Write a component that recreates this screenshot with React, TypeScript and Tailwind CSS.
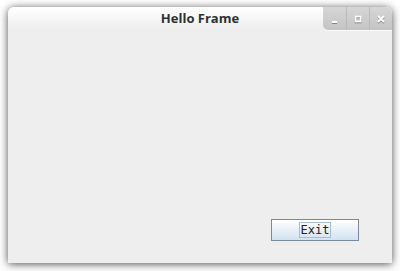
const WinButton = ({ kind }: { kind: "min" | "max" | "close" }) => (
  <div className="flex h-full w-[23px] items-center justify-center border-l border-[#b9b9b9] first:border-l-0">
    <svg width="8" height="8" viewBox="0 0 8 8" className="drop-shadow-[0_1px_0_rgba(0,0,0,0.35)]">
      {kind === "min" && <rect x="1" y="6" width="5" height="2" fill="#ffffff" />}
      {kind === "max" && <rect x="1.5" y="1.5" width="5" height="5" fill="none" stroke="#ffffff" strokeWidth="1.6" />}
      {kind === "close" && (
        <path d="M1 1 L7 7 M7 1 L1 7" stroke="#ffffff" strokeWidth="1.8" />
      )}
    </svg>
  </div>
);

export default function App() {
  return (
    <div className="h-[271px] w-[400px] bg-white pl-[8px] pt-[7px]">
      <div className="flex h-[256px] w-[384px] flex-col rounded-t-[6px] bg-[#eeeeee] shadow-[0_1px_8px_rgba(0,0,0,0.7)]">
        <div className="relative flex h-[24px] items-center justify-center rounded-t-[6px] bg-gradient-to-b from-[#ffffff] to-[#ededed]">
          <span className="font-['Open_Sans','Noto_Sans',sans-serif] text-[13px] font-bold text-[#2e3133]">
            Hello Frame
          </span>
          <div className="absolute right-0 top-0 flex h-[23px] overflow-hidden rounded-bl-[5px] rounded-tr-[6px] bg-gradient-to-b from-[#d6d6d6] to-[#c4c4c4] shadow-[0_1px_0_rgba(255,255,255,0.8)]">
            <WinButton kind="min" />
            <WinButton kind="max" />
            <WinButton kind="close" />
          </div>
        </div>
        <div className="flex flex-1 items-end justify-end pb-[22px] pr-[33px]">
          <button className="flex h-[22px] w-[88px] items-center justify-center border border-[#7a8a99] bg-gradient-to-b from-[#ffffff] to-[#d3e1ef]">
            <span className="border border-[#a9bdd2] px-[1px] font-['DejaVu_Sans_Mono',monospace] text-[12px] font-medium leading-[14px] text-[#222222]">
              Exit
            </span>
          </button>
        </div>
      </div>
    </div>
  );
}
